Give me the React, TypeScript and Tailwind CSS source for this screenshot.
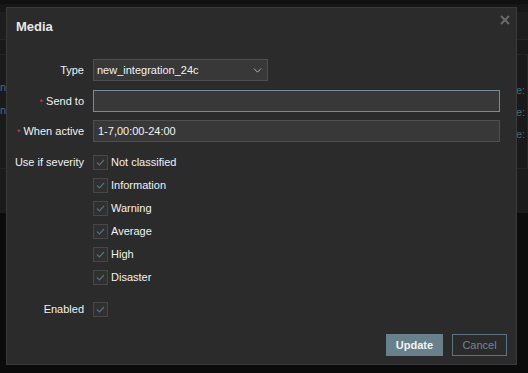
import { ChevronDown } from 'lucide-react';

const severities = ['Not classified', 'Information', 'Warning', 'Average', 'High', 'Disaster'];

function Check() {
	return (
		<span className="flex h-[15px] w-[15px] shrink-0 items-center justify-center border border-[#474747] bg-[#303030]">
			<svg width="9" height="7" viewBox="0 0 9 7" fill="none">
				<path d="M1 3.5 L3.5 6 L8 1" stroke="#4f7282" strokeWidth="1.2" />
			</svg>
		</span>
	);
}

function Req() {
	return <span className="mr-[3px] text-[9px] text-[#c94a4a]">*</span>;
}

export default function App() {
	return (
		<div className="relative h-[373px] w-[528px] overflow-hidden bg-[#0b0b0b] font-['Liberation_Sans',Arial,sans-serif] text-[11px] text-[#f2f2f2]">
			{/* dimmed page behind the overlay */}
			<div className="flex flex-col">
				<div className="h-[4px] bg-[#101010]" />
				<div className="h-[8px] bg-[#171717]" />
				<div className="h-[28px] border-b border-[#252525] bg-[#1d1d1d]" />
				<div className="h-[15px] border-b border-[#252525] bg-[#191919]" />
				<div className="flex h-[113px] justify-between bg-[#1a1a1a] text-[11px] text-[#3f6f82]">
					<div className="flex w-[6px] flex-col items-end gap-[10px] overflow-hidden pt-[26px] leading-[13px]">
						<span>n</span>
						<span>n</span>
					</div>
					<div className="flex w-[11px] flex-col gap-[9px] border-r border-[#262626] pt-[29px] leading-[13px]">
						<span className="-ml-[1px]">e:</span>
						<span className="-ml-[1px]">e:</span>
						<span className="-ml-[1px]">e:</span>
					</div>
				</div>
				<div className="h-[45px] border-t border-[#252525] bg-[#1b1b1b]" />
			</div>

			{/* Media dialog */}
			<div className="absolute left-[6px] top-[7px] flex h-[358px] w-[511px] flex-col border border-[#3a3a3a] bg-[#2b2b2b]">
				<div className="flex h-[51px] items-start justify-between pl-[9px] pr-[6px]">
					<h4 className="pt-[11px] text-[13px] font-bold leading-[16px] text-[#e8e8e8]">Media</h4>
					<svg className="mt-[7px]" width="10" height="10" viewBox="0 0 10 10">
						<path d="M1 1 L9 9 M9 1 L1 9" stroke="#6a6a6a" strokeWidth="2" />
					</svg>
				</div>

				<div className="flex flex-col">
					<div className="flex h-[22px] items-center gap-[9px]">
						<label className="w-[77px] text-right">Type</label>
						<div className="flex h-[22px] w-[175px] items-center justify-between border border-[#4f4f4f] bg-[#383838] pl-[3px] pr-[3px]">
							<span>new_integration_24c</span>
							<ChevronDown size={13} strokeWidth={1.5} className="text-[#cfcfcf]" />
						</div>
					</div>

					<div className="mt-[9px] flex h-[22px] items-center gap-[9px]">
						<label className="w-[77px] text-right">
							<Req />
							Send to
						</label>
						<div className="h-[22px] w-[407px] border border-[#768d99] bg-[#383838]" />
					</div>

					<div className="mt-[8px] flex h-[22px] items-center gap-[9px]">
						<label className="w-[77px] text-right">
							<Req />
							When active
						</label>
						<div className="flex h-[22px] w-[407px] items-center border border-[#4f4f4f] bg-[#383838] pl-[4px]">
							1-7,00:00-24:00
						</div>
					</div>

					<div className="mt-[13px] flex gap-[9px]">
						<label className="w-[77px] text-right leading-[15px]">Use if severity</label>
						<ul className="flex flex-col gap-[8px]">
							{severities.map(s => (
								<li key={s} className="flex h-[15px] items-center gap-[3px]">
									<Check />
									<span className="leading-[15px]">{s}</span>
								</li>
							))}
						</ul>
					</div>

					<div className="mt-[17px] flex h-[15px] items-center gap-[9px]">
						<label className="w-[77px] text-right">Enabled</label>
						<Check />
					</div>
				</div>

				<div className="mt-auto flex justify-end gap-[9px] pb-[8px] pr-[9px]">
					<button className="h-[22px] w-[57px] bg-[#687f8c] text-[11px] font-bold text-[#f4f4f4]">Update</button>
					<button className="h-[22px] w-[55px] border border-[#5c7482] text-[11px] text-[#6f8794]">Cancel</button>
				</div>
			</div>
		</div>
	);
}
